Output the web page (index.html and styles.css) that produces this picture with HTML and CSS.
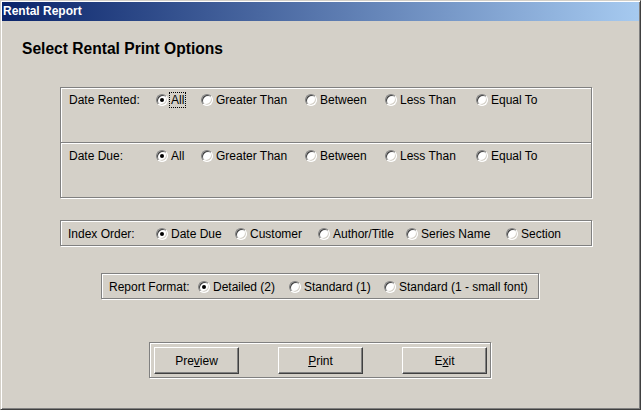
FILE: index.html
```html
<!doctype html>
<html>
<head>
  <link rel="stylesheet" href="styles.css">
</head>
<body>
  <div class="window">
    <div class="titlebar">Rental Report</div>
    <div class="content">
      <h1 class="heading">Select Rental Print Options</h1>

      <div class="group dates">
        <div class="sect">
          <div class="row date-row">
            <span class="label">Date Rented:</span>
            <span class="opt"><i class="radio on"></i><span class="focus">All</span></span>
            <span class="opt"><i class="radio"></i>Greater Than</span>
            <span class="opt"><i class="radio"></i>Between</span>
            <span class="opt"><i class="radio"></i>Less Than</span>
            <span class="opt"><i class="radio"></i>Equal To</span>
          </div>
        </div>
        <div class="sect">
          <div class="row date-row">
            <span class="label">Date Due:</span>
            <span class="opt"><i class="radio on"></i>All</span>
            <span class="opt"><i class="radio"></i>Greater Than</span>
            <span class="opt"><i class="radio"></i>Between</span>
            <span class="opt"><i class="radio"></i>Less Than</span>
            <span class="opt"><i class="radio"></i>Equal To</span>
          </div>
        </div>
      </div>

      <div class="group single index">
        <div class="row index-row">
          <span class="label">Index Order:</span>
          <span class="opt"><i class="radio on"></i>Date Due</span>
          <span class="opt"><i class="radio"></i>Customer</span>
          <span class="opt"><i class="radio"></i>Author/Title</span>
          <span class="opt"><i class="radio"></i>Series Name</span>
          <span class="opt"><i class="radio"></i>Section</span>
        </div>
      </div>

      <div class="group single format">
        <div class="row format-row">
          <span class="label">Report Format:</span>
          <span class="opt"><i class="radio on"></i>Detailed (2)</span>
          <span class="opt"><i class="radio"></i>Standard (1)</span>
          <span class="opt"><i class="radio"></i>Standard (1 - small font)</span>
        </div>
      </div>

      <div class="group buttons">
        <button class="btn">Pre<u>v</u>iew</button>
        <button class="btn"><u>P</u>rint</button>
        <button class="btn">E<u>x</u>it</button>
      </div>
    </div>
  </div>
</body>
</html>
```

FILE: styles.css
```css
body{
  margin: 0;
  background: #d4d0c8;
  font-family: "Liberation Sans", Arial, sans-serif;
  font-size: 12px;
  color: #000;
}
.window{
  width: 641px;
  height: 410px;
  box-sizing: border-box;
  padding: 1px;
  background: #d4d0c8;
  border: 1px solid;
  border-color: #d4d0c8 #404040 #404040 #d4d0c8;
  box-shadow: inset 1px 1px 0 #fff, inset -1px -1px 0 #808080;
}
.titlebar{
  height: 19px;
  line-height: 19px;
  padding-left: 1px;
  background: linear-gradient(to right, #0a246a, #a6caf0);
  color: #fff;
  font-weight: bold;
  font-size: 12px;
}
.content{
  display: flex;
  flex-direction: column;
  align-items: flex-start;
}
.heading{
  margin: 18px 0 0 20px;
  font-size: 15.6px;
  line-height: 19px;
  font-weight: bold;
}

/* etched group boxes */
.group{
  box-sizing: border-box;
  border: 1px solid #808080;
  box-shadow: inset 1px 1px 0 #fff, 1px 1px 0 #fff;
}
.dates{
  margin: 29px 0 0 58px;
  width: 532px;
}
.sect{
  box-sizing: border-box;
  height: 54px;
  padding: 5px 0 0 8px;
}
.sect + .sect{
  height: 55px;
  padding-top: 6px;
  border-top: 1px solid #808080;
  box-shadow: inset 0 1px 0 #fff;
}
.single{
  height: 26px;
  padding: 6px 0 0 7px;
}
.index{
  margin: 22px 0 0 58px;
  width: 532px;
}
.format{
  margin: 27px 0 0 99px;
  width: 438px;
}

.row{
  display: grid;
  align-items: center;
  height: 14px;
  line-height: 14px;
  white-space: nowrap;
}
.date-row{ grid-template-columns: 87px 45px 104px 80px 91px auto; }
.index-row{ grid-template-columns: 88px 79px 83px 88px 100px auto; }
.format-row{ grid-template-columns: 89px 91px 95px auto; }

.opt{
  display: flex;
  align-items: center;
}
.radio{
  position: relative;
  width: 12px;
  height: 12px;
  box-sizing: border-box;
  margin-right: 3px;
  border-radius: 50%;
  border: 1px solid;
  border-color: #808080 #fff #fff #808080;
  box-shadow: inset 1px 1px 0 #404040, inset -1px -1px 0 #d4d0c8;
  background: #fff;
  flex: none;
}
.radio.on::after{
  content: "";
  position: absolute;
  left: 3px;
  top: 3px;
  width: 4px;
  height: 4px;
  border-radius: 50%;
  background: #000;
}
.focus{
  display: inline-block;
  border: 1px dotted #000;
  margin: -1px -2px -1px -2px;
  padding: 0 1px;
  line-height: 14px;
}

.buttons{
  display: flex;
  gap: 39px;
  margin: 43px 0 0 147px;
  padding: 4px 3px 3px 4px;
}
.btn{
  width: 85px;
  height: 27px;
  padding: 0;
  background: #d4d0c8;
  font-family: "Liberation Sans", Arial, sans-serif;
  font-size: 12px;
  color: #000;
  border: 1px solid;
  border-color: #fff #404040 #404040 #fff;
  box-shadow: inset -1px -1px 0 #808080;
  border-radius: 0;
}
```
